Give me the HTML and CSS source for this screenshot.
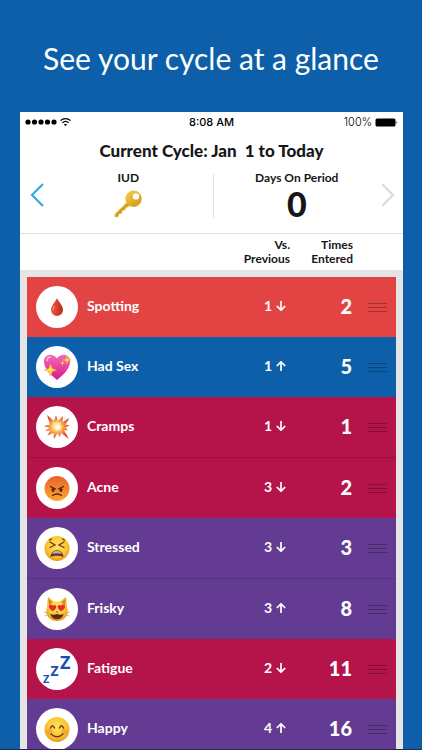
FILE: index.html
```html
<!DOCTYPE html>
<html lang="en">
<head>
<meta charset="utf-8">
<meta name="viewport" content="width=device-width, initial-scale=1">
<title>Cycle overview</title>
<link rel="stylesheet" href="styles.css">
</head>
<body>
<svg class="defs" aria-hidden="true">
  <defs>
    <radialGradient id="face" cx=".5" cy=".4" r=".6"><stop offset="0" stop-color="#ffe45c"/><stop offset=".65" stop-color="#fcc634"/><stop offset="1" stop-color="#e99a1c"/></radialGradient>
    <linearGradient id="angry" x2="0" y2="1"><stop offset="0" stop-color="#e7632b"/><stop offset="1" stop-color="#fba62e"/></linearGradient>
    <linearGradient id="heart" x2="0" y2="1"><stop offset="0" stop-color="#f46bb4"/><stop offset="1" stop-color="#d8188c"/></linearGradient>
    <linearGradient id="gold" x2="1" y2="1"><stop offset="0" stop-color="#f8d44c"/><stop offset="1" stop-color="#cf8f12"/></linearGradient>
    <linearGradient id="drop" x2="1"><stop offset="0" stop-color="#ee5b3f"/><stop offset="1" stop-color="#b92a18"/></linearGradient>
    <radialGradient id="blast"><stop offset="0" stop-color="#fff3b0"/><stop offset=".35" stop-color="#ffc35c"/><stop offset="1" stop-color="#dd4128"/></radialGradient>
    <symbol id="down" viewBox="0 0 10 10"><path d="M5 0v9M.8 5 5 9.200 9.200 5" fill="none" stroke="#fff" stroke-width="1.700"/></symbol>
    <symbol id="up" viewBox="0 0 10 10"><path d="M5 10V1M.8 5 5 .8 9.200 5" fill="none" stroke="#fff" stroke-width="1.700"/></symbol>
  </defs>
</svg>
<main class="page">
  <h1 class="headline">See your cycle at a glance</h1>
  <section class="phone">
    <div class="status">
      <svg class="signal" viewBox="0 0 46 10" role="img" aria-label="Signal and Wi-Fi">
        <circle cx="3" cy="5" r="2.6"/><circle cx="9.5" cy="5" r="2.6"/><circle cx="16" cy="5" r="2.6"/><circle cx="22.5" cy="5" r="2.6"/><circle cx="29" cy="5" r="2.6"/>
        <path d="M35.5 3.6a7.3 7.3 0 0 1 10 0M37.4 5.7a4.7 4.7 0 0 1 6.2 0" fill="none" stroke="#000" stroke-width="1.3"/>
        <path d="M38.9 7.4a2.4 2.4 0 0 1 3.2 0l-1.6 1.7z"/>
      </svg>
      <span class="clock">8:08 AM</span>
      <span class="power">100%
        <svg class="battery" viewBox="0 0 23 9" role="img" aria-label="Battery full"><rect x=".5" y=".5" width="20" height="8" rx="1.600"/><path d="M21.5 3q1.5 1.5 0 3z"/></svg>
      </span>
    </div>
    <h2 class="title">Current Cycle: Jan&nbsp; 1 to Today</h2>
    <div class="summary">
      <button class="nav" aria-label="Previous cycle"><svg viewBox="0 0 14 24"><path d="M13 1 2 12l11 11" fill="none" stroke="#35a8e6" stroke-width="2.200"/></svg></button>
      <div class="stat">
        <span class="stat-name">IUD</span>
        <svg class="key" viewBox="0 0 28 28" role="img" aria-label="Key">
          <path d="M13.5 11.5 .7 23.9 .5 27l3.200.3 1.300-1.200-.2-2.100 2 .1 1.600-1.600-.2-2.100 2.100.2 1.500-1.500-.1-1.600 2 .1 3.200-2.800z" fill="url(#gold)"/>
          <path d="M2 25.5 14 14" stroke="#a86d0d" stroke-width=".8"/>
          <path fill-rule="evenodd" d="M19.5.6a8.200 8.200 0 1 1 0 16.400 8.200 8.200 0 0 1 0-16.400zm2.500 2.600a3.200 3.200 0 1 0 0 6.400 3.200 3.200 0 0 0 0-6.400z" fill="url(#gold)"/>
        </svg>
      </div>
      <div class="stat stat-split">
        <span class="stat-name">Days On Period</span>
        <strong class="stat-value">0</strong>
      </div>
      <button class="nav" aria-label="Next cycle"><svg viewBox="0 0 14 24"><path d="m1 1 11 11L1 23" fill="none" stroke="#dcdcdc" stroke-width="2.200"/></svg></button>
    </div>
    <table class="entries">
      <thead>
        <tr class="columns"><td></td><td></td><th scope="col">Vs.<br>Previous</th><th scope="col">Times<br>Entered</th><td></td></tr>
      </thead>
      <tbody>
        <tr class="row red">
          <td class="icon"><svg viewBox="0 0 42 42"><path d="M21 12c1.500 4 6 7.500 6 12a6 6 0 0 1-12 0c0-4.500 4.500-8 6-12z" fill="url(#drop)"/><path d="M17 24q0-2 1.500-4" fill="none" stroke="#ff9b80"/></svg></td>
          <th scope="row">Spotting</th>
          <td class="versus">1 <svg role="img" aria-label="down"><use href="#down"/></svg></td><td class="times">2</td>
          <td class="drag"><button class="grip" aria-label="Reorder Spotting"></button></td>
        </tr>
        <tr class="row blue">
          <td class="icon"><svg viewBox="0 0 42 42"><path d="M21 34C15 29 8 23 8 15.500 8 8 17 6.500 21 12.500 25 6.500 34 8 34 15.500 34 23 27 29 21 34z" fill="url(#heart)"/><path d="M11 15q0-4 4-4" fill="none" stroke="#ffb9df" stroke-width="1.500"/><path d="m14.500 18 1.600 4.400 4.400 1.600-4.400 1.600-1.600 4.400-1.600-4.400L8.500 24l4.400-1.600zM31 10l1 3 3 1-3 1-1 3-1-3-3-1 3-1z" fill="#ffdf55" stroke="#f3a52e" stroke-width=".6"/><path d="m26.500 14.500.6 1.900 1.900.6-1.900.6-.6 1.900-.6-1.900-1.900-.6 1.900-.6z" fill="#ffe06b"/></svg></td>
          <th scope="row">Had Sex</th>
          <td class="versus">1 <svg role="img" aria-label="up"><use href="#up"/></svg></td><td class="times">5</td>
          <td class="drag"><button class="grip" aria-label="Reorder Had Sex"></button></td>
        </tr>
        <tr class="row crimson">
          <td class="icon"><svg viewBox="0 0 42 42"><path d="m11 9 7 6 2-6 2 6 5-5-.5 6 7-4-4 6.500 4 1-4 2 2.500 3-4-.5L33 33l-8-6-1 4-2.500-3.500L18 33l-.5-6-6 2.500 3-5L9 25l4.500-3L8 20l6-1.500z" fill="url(#blast)"/><path d="m16 15 3 2 2-2 1 2 3-1-.5 3 2 2-2 1 1 3-3-1-2 1.500-1-2.500-3 1 1-3-2-1 2-1.500z" fill="#ffe49a"/><circle cx="21.500" cy="21" r="2.500" fill="#fffbe2"/></svg></td>
          <th scope="row">Cramps</th>
          <td class="versus">1 <svg role="img" aria-label="down"><use href="#down"/></svg></td><td class="times">1</td>
          <td class="drag"><button class="grip" aria-label="Reorder Cramps"></button></td>
        </tr>
        <tr class="row crimson again">
          <td class="icon"><svg viewBox="0 0 42 42"><circle cx="21" cy="21.500" r="12.500" fill="url(#angry)"/><g fill="none" stroke="#4c230d" stroke-linecap="round" stroke-width="1.300"><path d="m14.500 19.500 5 2.500M27.500 19.500l-5 2.500M16.500 28.500q4.500-3 9 0"/></g><g fill="#4c230d"><ellipse cx="17" cy="23" rx="1.500" ry="2"/><ellipse cx="25" cy="23" rx="1.500" ry="2"/></g></svg></td>
          <th scope="row">Acne</th>
          <td class="versus">3 <svg role="img" aria-label="down"><use href="#down"/></svg></td><td class="times">2</td>
          <td class="drag"><button class="grip" aria-label="Reorder Acne"></button></td>
        </tr>
        <tr class="row purple">
          <td class="icon"><svg viewBox="0 0 42 42"><circle cx="21" cy="21.500" r="12.500" fill="url(#face)"/><path d="M14.500 30c.3-9 12.700-9 13 0q-6.500-2.500-13 0z" fill="#6b3b18"/><path d="M16 27c2-4.500 8-4.500 10 0q-5-1.500-10 0z" fill="#b8b9b6"/><g fill="none" stroke="#6b3b18" stroke-linecap="round" stroke-width="1.300"><path d="m14 15 5 3-5 2.500M28 15l-5 3 5 2.500M13.500 13l2-1M28.500 13l-2-1"/></g></svg></td>
          <th scope="row">Stressed</th>
          <td class="versus">3 <svg role="img" aria-label="down"><use href="#down"/></svg></td><td class="times">3</td>
          <td class="drag"><button class="grip" aria-label="Reorder Stressed"></button></td>
        </tr>
        <tr class="row purple again">
          <td class="icon"><svg viewBox="0 0 42 42"><path d="M11 19 12 9l6 4.500h6L30 9l1 10c3 8-3 14-10 14S8 27 11 19z" fill="url(#face)"/><path d="m12.500 11 4 3-3.500 3zM29.500 11l-4 3 3.500 3z" fill="#c98630"/><path d="M17 23.300c-3-2-4.300-3.300-4-5.300.4-2 3.200-2 3.800 0 1-1.700 3.800-1 3.500 1-.2 1.700-1.600 2.800-3.300 4.300zM25 23.300c3-2 4.300-3.300 4-5.300-.4-2-3.200-2-3.800 0-1-1.700-3.800-1-3.500 1 .2 1.700 1.600 2.800 3.300 4.300z" fill="#e9292c"/><path d="M14.500 26q3 1.500 6.500 0 3.500 1.500 6.500 0c-1 7-12 7-13 0z" fill="#5b2914"/><path d="m19.800 23.500 1.200 1.500 1.200-1.500z" fill="#744016"/><path d="m8 24 4.500 1M8.500 28l4-1.500M34 24l-4.500 1M33.500 28l-4-1.500" stroke="#d5a24c" stroke-width=".7"/></svg></td>
          <th scope="row">Frisky</th>
          <td class="versus">3 <svg role="img" aria-label="up"><use href="#up"/></svg></td><td class="times">8</td>
          <td class="drag"><button class="grip" aria-label="Reorder Frisky"></button></td>
        </tr>
        <tr class="row crimson">
          <td class="icon"><svg class="snore" viewBox="0 0 42 42" aria-hidden="true"><text x="24" y="21" font-size="18">Z</text><text x="14.500" y="28" font-size="14">Z</text><text x="7" y="35" font-size="11">Z</text></svg></td>
          <th scope="row">Fatigue</th>
          <td class="versus">2 <svg role="img" aria-label="down"><use href="#down"/></svg></td><td class="times">11</td>
          <td class="drag"><button class="grip" aria-label="Reorder Fatigue"></button></td>
        </tr>
        <tr class="row purple">
          <td class="icon"><svg viewBox="0 0 42 42"><circle cx="21" cy="21.500" r="12.500" fill="url(#face)"/><circle cx="13.500" cy="23.500" r="3" fill="#f58c3c" opacity=".55"/><circle cx="28.500" cy="23.500" r="3" fill="#f58c3c" opacity=".55"/><g fill="none" stroke="#6b3b18" stroke-linecap="round" stroke-width="1.500"><path d="M14.500 20q2-4.500 4 0M23.500 20q2-4.500 4 0M15 26q6 5.500 12 0"/></g></svg></td>
          <th scope="row">Happy</th>
          <td class="versus">4 <svg role="img" aria-label="up"><use href="#up"/></svg></td><td class="times">16</td>
          <td class="drag"><button class="grip" aria-label="Reorder Happy"></button></td>
        </tr>
      </tbody>
    </table>
  </section>
</main>
</body>
</html>
```
FILE: styles.css
```css
* { box-sizing: border-box; }

body {
  margin: 0;
  background: #0c5fa8;
  color: #161616;
  font-family: Lato, "Open Sans", sans-serif;
}

button {
  padding: 0;
  border: 0;
  background: none;
}

svg { display: block; }

.defs {
  position: absolute;
  width: 0;
  height: 0;
}

.page {
  height: 100vh;
  overflow: hidden;
  border-bottom: 1px solid #2b2350;
}

.headline {
  margin: 0;
  padding: 38px 0 34px;
  color: #fff;
  font-size: 30px;
  font-weight: 400;
  line-height: 40px;
  text-align: center;
  white-space: nowrap;
}

.phone {
  margin: 0 19px 0 20px;
  background: #fff;
}

.status {
  display: grid;
  grid-template-columns: 1fr auto 1fr;
  align-items: center;
  height: 20px;
  padding: 0 5px;
  color: #000;
  font-family: Inter, sans-serif;
  font-size: 11px;
}

.signal {
  width: 46px;
  height: 10px;
}

.clock { font-weight: 500; }

.power {
  display: flex;
  justify-content: flex-end;
  align-items: center;
  gap: 3px;
  font-weight: 300;
}

.battery {
  width: 23px;
  height: 9px;
}

.title {
  margin: 0;
  padding: 8px 0;
  font-size: 17px;
  font-weight: 900;
  line-height: 22px;
  text-align: center;
}

.summary {
  display: grid;
  grid-template-columns: 14px 1fr 1fr 14px;
  height: 64px;
  padding: 0 8px 0 10px;
  border-bottom: 1px solid #dfdfdf;
}

.nav {
  display: grid;
  place-items: center;
  height: 50px;
}

.nav svg {
  width: 14px;
  height: 24px;
}

.stat {
  display: flex;
  flex-direction: column;
  align-items: center;
  height: 48px;
}

.stat-split { background: linear-gradient(#e2e2e2, #e2e2e2) left bottom / 1px 44px no-repeat; }

.stat-name {
  font-size: 12px;
  font-weight: 700;
  line-height: 16px;
}

.key {
  width: 28px;
  height: 28px;
  margin-top: 4px;
}

.stat-value {
  font-size: 34px;
  font-weight: 900;
  line-height: 36px;
}

.entries,
.entries thead,
.entries tbody {
  display: block;
}

.entries tbody {
  padding: 7px;
  background: #e5e5e5;
}

.entries tr {
  display: grid;
  grid-template-columns: 51px 1fr 60px 63px 35px;
  align-items: center;
}

.entries td,
.entries th {
  padding: 0;
}

.entries .columns {
  height: 36px;
  padding: 0 15px 0 16px;
}

.columns th {
  font-size: 12px;
  font-weight: 700;
  line-height: 14px;
  text-align: right;
}

.entries .row {
  padding: 9px 9px 9px 9px;
  color: #fff;
}

.red { background: #e24444; }
.blue { background: #0c5fa8; }
.crimson { background: #b5144b; }
.purple { background: #643b92; }

.entries .again { border-top: 1px solid #00000026; }

.icon svg {
  width: 42px;
  height: 42px;
  border-radius: 50%;
  background: #fff;
}

.snore {
  fill: #174fb3;
  font-family: "Open Sans", sans-serif;
  font-weight: 700;
}

.row th {
  font-size: 14px;
  font-weight: 700;
  text-align: left;
}

.entries .versus {
  display: flex;
  justify-content: flex-end;
  align-items: center;
  gap: 4px;
  padding-right: 3px;
  font-size: 14px;
  font-weight: 700;
}

.versus svg {
  width: 10px;
  height: 10px;
}

.times {
  font-size: 20px;
  font-weight: 900;
  text-align: right;
}

.row th,
.row .versus,
.row .times {
  line-height: 18px;
  padding-bottom: 2px;
}

.drag {
  display: flex;
  justify-content: flex-end;
}

.grip {
  width: 19px;
  height: 9px;
  border: solid #00000048;
  border-width: 1px 0;
  background: linear-gradient(#00000048, #00000048) center / 100% 1px no-repeat;
}
```
